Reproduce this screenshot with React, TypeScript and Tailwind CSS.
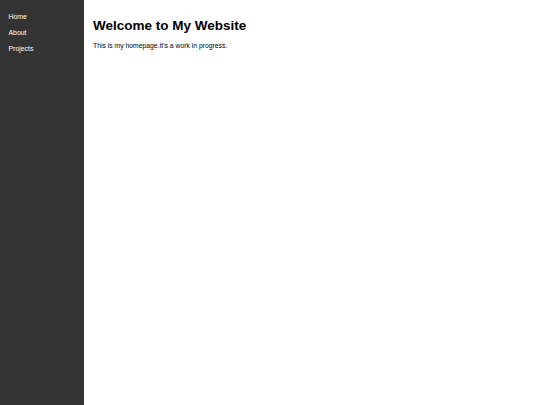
import React from 'react';

const links = ['Home', 'About', 'Projects'];

export default function App() {
  return (
    <div className="flex h-[405px] w-[540px] bg-white" style={{ fontFamily: '"Liberation Sans", Arial, sans-serif' }}>
      <aside className="w-[84px] shrink-0 bg-[#333333] pt-[8.5px] pl-[8.5px]">
        <ul>
          {links.map(l => (
            <li key={l} className="h-[16px] text-[6.9px] leading-[16px] text-white">
              <a href="#">{l}</a>
            </li>
          ))}
        </ul>
      </aside>
      <main className="flex-1 px-[9px] pt-[17.5px]">
        <h1 className="text-[13.5px] font-bold leading-[15.3px] text-black">Welcome to My Website</h1>
        <p className="mt-[9px] text-[6.8px] leading-[7.8px] text-black">This is my homepage.It's a work in progress.</p>
      </main>
    </div>
  );
}
